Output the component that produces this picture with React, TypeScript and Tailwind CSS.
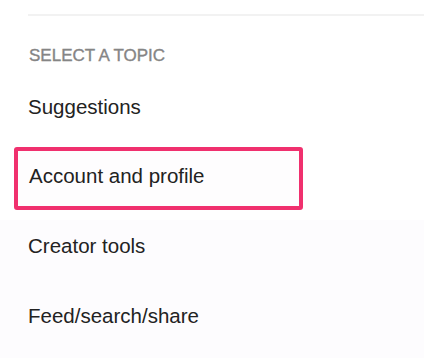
import React from 'react';

const topics = ['Suggestions', 'Account and profile', 'Creator tools', 'Feed/search/share'];

export default function App() {
  const selected = 'Account and profile';

  return (
    <div className="w-[424px] h-[358px] overflow-hidden bg-white font-['Liberation_Sans',Arial,sans-serif] text-[#222222]">
      <div className="pt-[14px]">
        <div className="ml-[28px] h-[2px] bg-[#f2f2f2]" />
      </div>

      {/* Topic header */}
      <div className="mt-[30px] pl-[29px] text-[17px] leading-[20px] text-[#858585] uppercase [-webkit-text-stroke:0.35px_#858585]">
        Select a topic
      </div>

      <div className="mt-[27px] pl-[28px] text-[20.5px] leading-[28px]">{topics[0]}</div>

      {/* Selected topic highlight */}
      <div className="mt-[26px] ml-[14px] w-[289px] h-[63px] border-4 border-[#f0306e] rounded-[3px] bg-[#fefdfe] pl-[11px] pt-[11px]">
        <div className="text-[20.5px] leading-[28px]">{selected}</div>
      </div>

      <div className="mt-[10px] bg-[#fdfcfe] h-[200px] pt-[12px]">
        <div className="pl-[28px] text-[20.5px] leading-[28px]">{topics[2]}</div>
        <div className="mt-[42px] pl-[28px] text-[20.5px] leading-[28px]">{topics[3]}</div>
      </div>
    </div>
  );
}
